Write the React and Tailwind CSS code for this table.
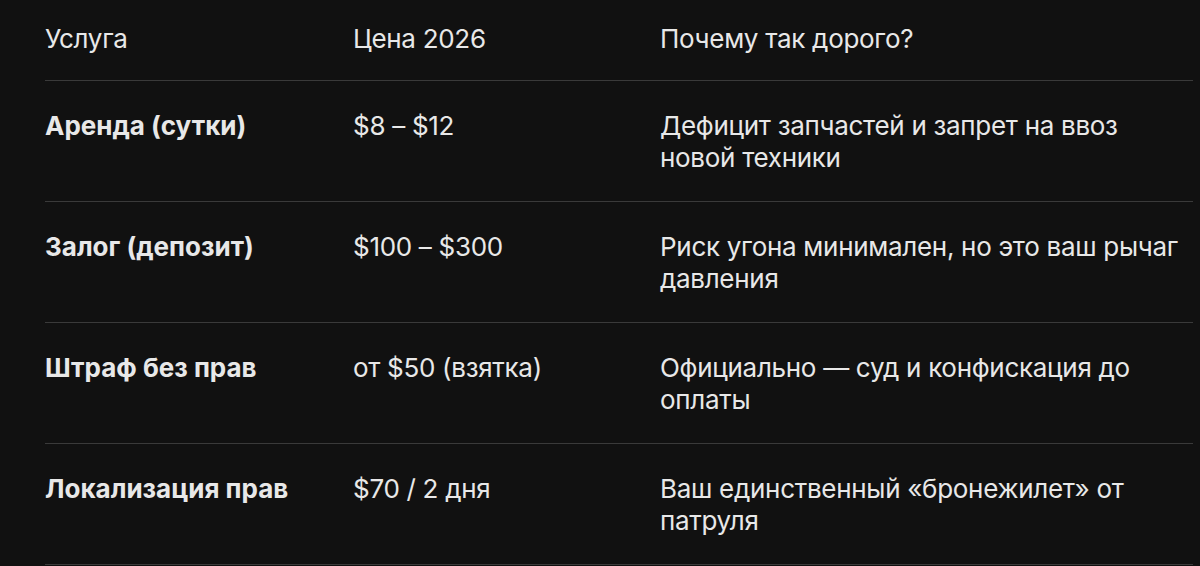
const rows = [
  { name: "Аренда (сутки)", price: "$8 – $12", why: ["Дефицит запчастей и запрет на ввоз", "новой техники"] },
  { name: "Залог (депозит)", price: "$100 – $300", why: ["Риск угона минимален, но это ваш рычаг", "давления"] },
  { name: "Штраф без прав", price: "от $50 (взятка)", why: ["Официально — суд и конфискация до", "оплаты"] },
  { name: "Локализация прав", price: "$70 / 2 дня", why: ["Ваш единственный «бронежилет» от", "патруля"] },
];

export default function App() {
  return (
    <div className="min-h-screen bg-[#111111] text-[#e8e8e8] font-['Inter',sans-serif] text-[26px] leading-[32px] tracking-[-0.3px] overflow-hidden">
      <div className="ml-[45px] w-[1148px]">
        {/* Header */}
        <div className="grid grid-cols-[308px_307px_1fr] pt-[23px] pb-[25px] border-b border-[#3a3a3a]">
          <div>Услуга</div>
          <div>Цена 2026</div>
          <div>Почему так дорого?</div>
        </div>

        {rows.map(r => (
          <div key={r.name} className="grid grid-cols-[308px_307px_1fr] pt-[29px] pb-[27px] border-b border-[#3a3a3a]">
            <div className="font-bold tracking-normal">{r.name}</div>
            <div>{r.price}</div>
            <div>
              {r.why[0]}
              <br />
              {r.why[1]}
            </div>
          </div>
        ))}
      </div>
    </div>
  );
}
